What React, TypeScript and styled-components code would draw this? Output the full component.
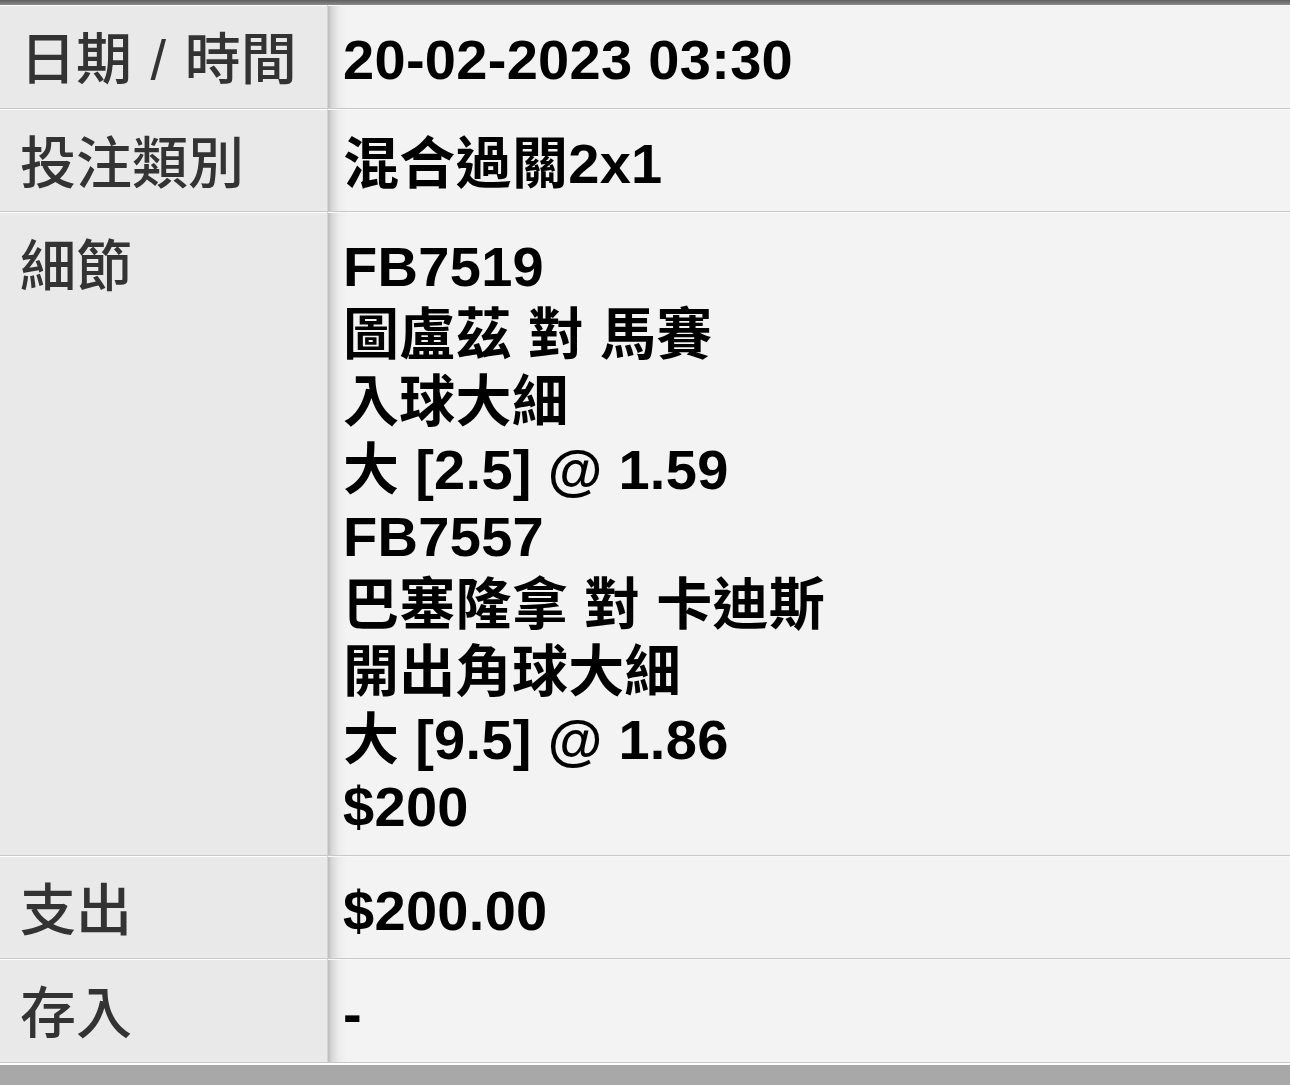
import React from 'react'
import styled, { createGlobalStyle } from 'styled-components'

const GlobalStyle = createGlobalStyle`
  html, body {
    margin: 0;
    padding: 0;
    min-height: 100%;
    background: #a8a8a8;
  }
  body {
    font-family: 'Liberation Sans', 'Noto Sans CJK TC', sans-serif;
  }
`

const Page = styled.div`
  width: 1290px;
`

const TopBar = styled.div`
  height: 5px;
  background: linear-gradient(to bottom, #5f5f5f, #8a8a8a);
`

const Table = styled.div`
  display: flex;
  flex-direction: column;
  border-bottom: 2px solid #ffffff;
`

const Row = styled.div`
  display: grid;
  grid-template-columns: 328px 1fr;
  border-bottom: 1px solid #c8c8c8;
`

const Label = styled.div`
  background: #e9e9e9;
  border-right: 1px solid #d4d4d4;
  box-shadow: inset 0 1px 0 #ffffff;
  padding: 21px 0 14px 20px;
  font-size: 56px;
  line-height: 67.5px;
  font-weight: 500;
  color: #333333;
  word-spacing: 3px;
`

const Value = styled.div`
  background: linear-gradient(to right, #bcbcbc 0, #d8d8d8 4px, #ececec 11px, #f3f3f3 18px);
  box-shadow: inset 0 1px 0 #f9f9f9;
  padding: 21px 0 14px 15px;
  font-size: 56px;
  line-height: 67.5px;
  font-weight: 700;
  color: #000000;
  letter-spacing: 0.3px;
`

const Line = styled.div`
  white-space: nowrap;
`

type Item = { label: string; lines: string[] }

const items: Item[] = [
  { label: '日期 / 時間', lines: ['20-02-2023 03:30'] },
  { label: '投注類別', lines: ['混合過關2x1'] },
  {
    label: '細節',
    lines: [
      'FB7519',
      '圖盧茲 對 馬賽',
      '入球大細',
      '大 [2.5] @ 1.59',
      'FB7557',
      '巴塞隆拿 對 卡迪斯',
      '開出角球大細',
      '大 [9.5] @ 1.86',
      '$200',
    ],
  },
  { label: '支出', lines: ['$200.00'] },
  { label: '存入', lines: ['-'] },
]

const App = () => {
  return (
    <Page>
      <GlobalStyle />
      <TopBar />
      <Table>
        {items.map((item) => (
          <Row key={item.label}>
            <Label>{item.label}</Label>
            <Value>
              {item.lines.map((line, i) => (
                <Line key={i}>{line}</Line>
              ))}
            </Value>
          </Row>
        ))}
      </Table>
    </Page>
  )
}

export default App
